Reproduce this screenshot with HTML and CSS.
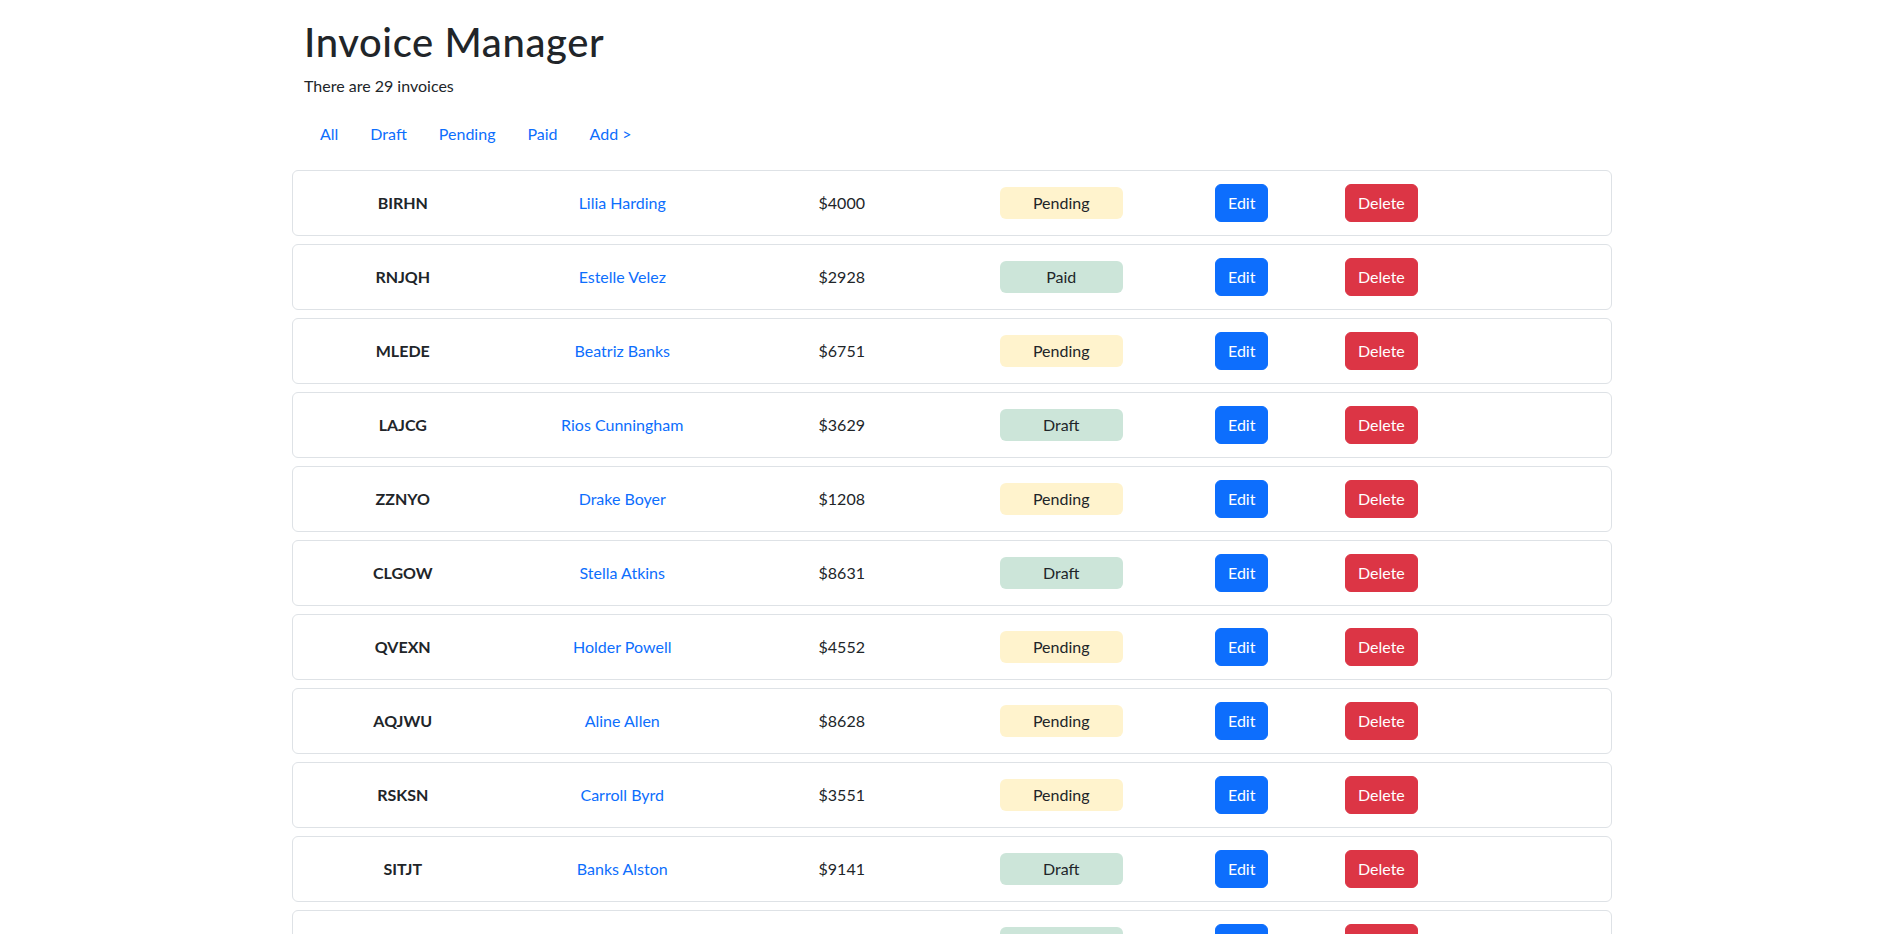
FILE: index.html
```html
<!DOCTYPE html>
<html lang="en">
<head>
<meta charset="utf-8">
<title>Invoice Manager</title>
<link rel="stylesheet" href="styles.css">
</head>
<body>
<div class="page">
  <header class="head">
    <h1 class="title">Invoice Manager</h1>
    <p class="count">There are 29 invoices</p>
    <nav class="nav">
      <a class="nav-link" href="#">All</a>
      <a class="nav-link" href="#">Draft</a>
      <a class="nav-link" href="#">Pending</a>
      <a class="nav-link" href="#">Paid</a>
      <a class="nav-link" href="#">Add &gt;</a>
    </nav>
  </header>
  <main class="list">
    <div class="inv"><span class="id">BIRHN</span><a class="name" href="#">Lilia Harding</a><span class="amt">$4000</span><span class="st"><span class="badge pending">Pending</span></span><button class="btn edit">Edit</button><button class="btn del">Delete</button></div>
    <div class="inv"><span class="id">RNJQH</span><a class="name" href="#">Estelle Velez</a><span class="amt">$2928</span><span class="st"><span class="badge done">Paid</span></span><button class="btn edit">Edit</button><button class="btn del">Delete</button></div>
    <div class="inv"><span class="id">MLEDE</span><a class="name" href="#">Beatriz Banks</a><span class="amt">$6751</span><span class="st"><span class="badge pending">Pending</span></span><button class="btn edit">Edit</button><button class="btn del">Delete</button></div>
    <div class="inv"><span class="id">LAJCG</span><a class="name" href="#">Rios Cunningham</a><span class="amt">$3629</span><span class="st"><span class="badge done">Draft</span></span><button class="btn edit">Edit</button><button class="btn del">Delete</button></div>
    <div class="inv"><span class="id">ZZNYO</span><a class="name" href="#">Drake Boyer</a><span class="amt">$1208</span><span class="st"><span class="badge pending">Pending</span></span><button class="btn edit">Edit</button><button class="btn del">Delete</button></div>
    <div class="inv"><span class="id">CLGOW</span><a class="name" href="#">Stella Atkins</a><span class="amt">$8631</span><span class="st"><span class="badge done">Draft</span></span><button class="btn edit">Edit</button><button class="btn del">Delete</button></div>
    <div class="inv"><span class="id">QVEXN</span><a class="name" href="#">Holder Powell</a><span class="amt">$4552</span><span class="st"><span class="badge pending">Pending</span></span><button class="btn edit">Edit</button><button class="btn del">Delete</button></div>
    <div class="inv"><span class="id">AQJWU</span><a class="name" href="#">Aline Allen</a><span class="amt">$8628</span><span class="st"><span class="badge pending">Pending</span></span><button class="btn edit">Edit</button><button class="btn del">Delete</button></div>
    <div class="inv"><span class="id">RSKSN</span><a class="name" href="#">Carroll Byrd</a><span class="amt">$3551</span><span class="st"><span class="badge pending">Pending</span></span><button class="btn edit">Edit</button><button class="btn del">Delete</button></div>
    <div class="inv"><span class="id">SITJT</span><a class="name" href="#">Banks Alston</a><span class="amt">$9141</span><span class="st"><span class="badge done">Draft</span></span><button class="btn edit">Edit</button><button class="btn del">Delete</button></div>
    <div class="inv"><span class="id">HWKTE</span><a class="name" href="#">Mercer Lowe</a><span class="amt">$2714</span><span class="st"><span class="badge done">Paid</span></span><button class="btn edit">Edit</button><button class="btn del">Delete</button></div>
    <div class="inv"><span class="id">PXQRL</span><a class="name" href="#">Nadia Holt</a><span class="amt">$5380</span><span class="st"><span class="badge pending">Pending</span></span><button class="btn edit">Edit</button><button class="btn del">Delete</button></div>
    <div class="inv"><span class="id">GFDAU</span><a class="name" href="#">Owen Pratt</a><span class="amt">$1975</span><span class="st"><span class="badge done">Draft</span></span><button class="btn edit">Edit</button><button class="btn del">Delete</button></div>
    <div class="inv"><span class="id">TMWEO</span><a class="name" href="#">Cora Fields</a><span class="amt">$6402</span><span class="st"><span class="badge done">Paid</span></span><button class="btn edit">Edit</button><button class="btn del">Delete</button></div>
  </main>
</div>
</body>
</html>
```
FILE: styles.css
```css
* { box-sizing: border-box; }

body {
  margin: 0;
  font-family: "Lato", "Liberation Sans", sans-serif;
  font-size: 16px;
  line-height: 1.5;
  color: #212529;
  background: #fff;
}

.page {
  width: 1320px;
  margin-left: calc(50% - 657.5px);
  padding-top: 18px;
}

.head {
  padding: 0 12px;
}

.title {
  margin: 0 0 8px;
  font-size: 40px;
  font-weight: 500;
  line-height: 1.2;
  letter-spacing: 0.6px;
}

.count {
  margin: 0 0 16px;
}

.nav {
  display: flex;
  margin-bottom: 16px;
}

.nav-link {
  padding: 8px 16px;
  color: #0d6efd;
  text-decoration: none;
}

.list {
  display: flex;
  flex-direction: column;
  gap: 8px;
}

.inv {
  display: grid;
  grid-template-columns: repeat(4, 219.5px) 130px 1fr;
  align-items: center;
  padding: 13px 0;
  border: 1px solid #dee2e6;
  border-radius: 6px;
  background: #fff;
}

.id, .name, .amt, .st {
  text-align: center;
}

.id { font-weight: 700; }

.name {
  color: #0d6efd;
  text-decoration: none;
}

.st {
  display: flex;
  justify-content: center;
}

.badge {
  display: block;
  width: 123px;
  height: 32px;
  padding: 4px 0;
  border-radius: 6px;
  text-align: center;
  color: #212529;
}

.pending { background: #fff3cd; }
.done { background: #cce5d9; }

.btn {
  justify-self: start;
  margin-left: 44px;
  padding: 6px 12px;
  border: 1px solid transparent;
  border-radius: 6px;
  font: inherit;
  line-height: 24px;
  color: #fff;
  cursor: pointer;
}

.edit { background: #0d6efd; border-color: #0d6efd; }
.del { background: #dc3545; border-color: #dc3545; }
```
